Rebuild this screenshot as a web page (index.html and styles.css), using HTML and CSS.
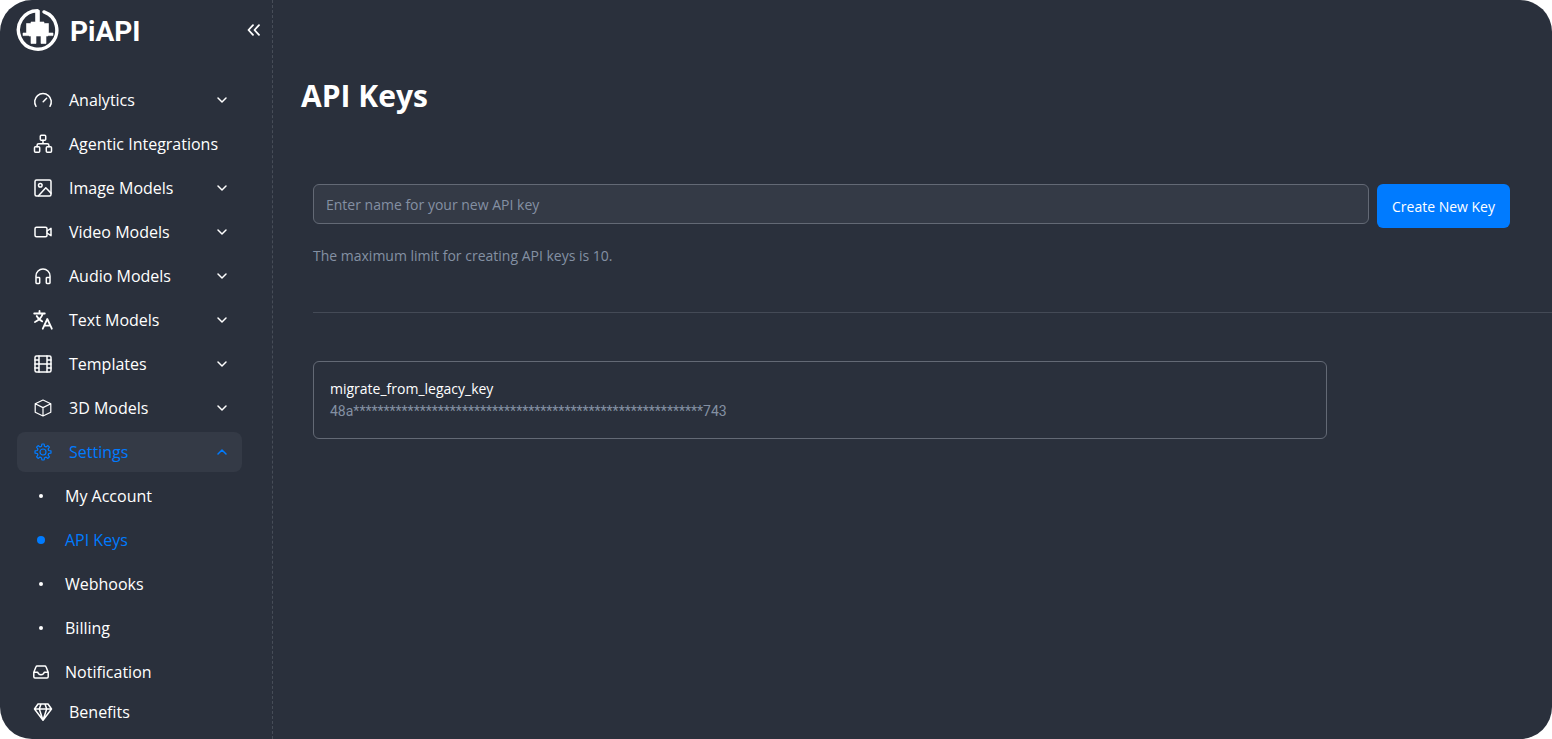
FILE: index.html
```html
<!DOCTYPE html>
<html lang="en">
<head>
<meta charset="utf-8">
<meta name="viewport" content="width=device-width, initial-scale=1">
<title>API Keys - PiAPI</title>
<link rel="stylesheet" href="styles.css">
</head>
<body>
<svg class="sprite" aria-hidden="true">
  <symbol id="down" viewBox="0 0 16 16"><path d="M4 6l4 4 4-4"/></symbol>
  <symbol id="up" viewBox="0 0 16 16"><path d="M4 10l4-4 4 4"/></symbol>
</svg>
<div class="app">
  <aside class="sidebar">
    <div class="brand">
      <a class="logo" href="#">
        <svg class="logo-mark" viewBox="0 0 44 44" aria-hidden="true">
          <path d="M21.500 2.800A19.200 19.200 0 1 0 28 3.900" fill="none" stroke="#fff" stroke-width="3.400" stroke-linecap="round"/>
          <path d="M19.500 2.500h4V14H28v1.500h4.500V25H37v2.600h-5V28h-2v7.500h-5V28h-5v7.500h-5V28h-2v-.4H7V25h3.500v-9.500H15V14h4.500z" fill="#fff" stroke="#fff" stroke-width=".6" stroke-linejoin="round"/>
        </svg>
        <span class="logo-text">PiAPI</span>
      </a>
      <button class="collapse" aria-label="Collapse sidebar">
        <svg class="ico bold" viewBox="0 0 16 16"><path d="M7 3.200L2.500 8 7 12.800M13 3.200L8.500 8l4.500 4.800"/></svg>
      </button>
    </div>
    <nav class="nav">
      <button class="item"><svg class="ico lg" viewBox="0 0 20 20"><path d="M3 16.300a8.300 8.300 0 1 1 14 0M10.200 11.800l3.400-3.500"/></svg><span class="label">Analytics</span><svg class="ico"><use href="#down"/></svg></button>
      <a class="item" href="#"><svg class="ico lg" viewBox="0 0 20 20"><rect x="7.300" y="1.200" width="5.400" height="5" rx="1"/><rect x="1.500" y="12.800" width="5.200" height="5.400" rx="1"/><rect x="13.300" y="12.800" width="5.200" height="5.400" rx="1"/><path d="M10 6.200v3.500M4.100 12.800v-1.500q0-1.600 1.600-1.600h8.600q1.600 0 1.600 1.600v1.500"/></svg><span class="label">Agentic Integrations</span></a>
      <button class="item"><svg class="ico lg" viewBox="0 0 20 20"><rect x="2" y="2" width="16" height="16" rx="1.500"/><circle cx="7.300" cy="7.300" r="1.800"/><path d="M5.500 17.800l7.300-8 5.200 5.300"/></svg><span class="label">Image Models</span><svg class="ico"><use href="#down"/></svg></button>
      <button class="item"><svg class="ico lg" viewBox="0 0 20 20"><rect x="2" y="5.300" width="12" height="9.400" rx="1.500"/><path d="M14 9l4-2.700v7.400L14 11"/></svg><span class="label">Video Models</span><svg class="ico"><use href="#down"/></svg></button>
      <button class="item"><svg class="ico lg" viewBox="0 0 20 20"><path d="M3 16.500V10a7 7 0 0 1 14 0v6.500M3 11.500h3q.7 0 .7.700v4.600q0 .7-.7.700H3.700q-.7 0-.7-.7zM17 11.500h-3q-.7 0-.7.700v4.600q0 .7.700.7h2.300q.7 0 .7-.7z"/></svg><span class="label">Audio Models</span><svg class="ico"><use href="#down"/></svg></button>
      <button class="item"><svg class="ico lg bold" viewBox="0 0 20 20"><path d="M1.200 3.500h10.600M6.500 1v2.500M9.800 3.500Q8.500 8.700 2 12M3.700 6q1.800 3.800 5.500 5.300M9.800 18.700L14.300 9l4.500 9.700M11.200 15.700h6.200"/></svg><span class="label">Text Models</span><svg class="ico"><use href="#down"/></svg></button>
      <button class="item"><svg class="ico lg" viewBox="0 0 20 20"><rect x="2" y="2" width="16" height="16" rx="1.500"/><path d="M6 2v16M14 2v16M6 10h8M2 6h4M2 10h4M2 14h4M14 6h4M14 10h4M14 14h4"/></svg><span class="label">Templates</span><svg class="ico"><use href="#down"/></svg></button>
      <button class="item"><svg class="ico lg thin" viewBox="0 0 20 20"><path d="M10 2l7.800 3.700v8.600L10 18l-7.800-3.700V5.700zM2.200 5.700L10 9.600l7.800-3.900M10 9.600V18"/></svg><span class="label">3D Models</span><svg class="ico"><use href="#down"/></svg></button>
      <button class="item open" aria-expanded="true"><svg class="ico lg thin" viewBox="0 0 20 20"><circle cx="10" cy="10" r="3"/><path d="M8.500 4.300L8.900 2h2.200l.4 2.300 1.500.600 1.900-1.300 1.500 1.500-1.300 1.900.6 1.500 2.300.4v2.200l-2.300.4-.6 1.500 1.300 1.900-1.500 1.500-1.900-1.300-1.500.600-.4 2.300H8.900l-.4-2.300-1.500-.6-1.900 1.300-1.500-1.500 1.300-1.900-.6-1.500L2 11.100V8.900l2.300-.4.6-1.500-1.300-1.900 1.500-1.500L7 4.900z"/></svg><span class="label">Settings</span><svg class="ico"><use href="#up"/></svg></button>
      <a class="item" href="#"><span class="dot"></span><span class="label">My Account</span></a>
      <a class="item current" href="#" aria-current="page"><span class="dot"></span><span class="label">API Keys</span></a>
      <a class="item" href="#"><span class="dot"></span><span class="label">Webhooks</span></a>
      <a class="item" href="#"><span class="dot"></span><span class="label">Billing</span></a>
      <a class="item flush" href="#"><svg class="ico" viewBox="0 0 16 16"><path d="M.8 8.200L3 2.800q.3-.8 1.100-.8h7.800q.8 0 1.100.8l2.200 5.400v4.600q0 1.200-1.200 1.200H2q-1.200 0-1.200-1.200zM.8 8.200h3.900q.5 2.500 3.300 2.500t3.300-2.500h3.900"/></svg><span class="label">Notification</span></a>
      <a class="item" href="#"><svg class="ico lg" viewBox="0 0 20 20"><path d="M5 2h10l3.500 5L10 18.300 1.500 7zM1.500 7h17M8 2L6.300 7 10 18.300 13.700 7 12 2"/></svg><span class="label">Benefits</span></a>
    </nav>
  </aside>
  <main class="main">
    <h1 class="title">API Keys</h1>
    <form class="create">
      <input class="field" type="text" aria-label="API key name" placeholder="Enter name for your new API key">
      <button class="primary" type="button">Create New Key</button>
    </form>
    <p class="hint">The maximum limit for creating API keys is 10.</p>
    <hr class="rule">
    <section class="card">
      <h2 class="key-name">migrate_from_legacy_key</h2>
      <p class="key-value">48a**********************************************************743</p>
    </section>
  </main>
</div>
</body>
</html>
```
FILE: styles.css
```css
* { box-sizing: border-box; }

body {
  margin: 0;
  background: #fff;
  color: #fff;
  font: 14px/24px "Open Sans", "Noto Sans", sans-serif;
}

.sprite { display: none; }

.app {
  display: flex;
  min-height: 100vh;
  background: #2a303c;
  border-radius: 32px;
  overflow: hidden;
}

.sidebar {
  flex: none;
  width: 273px;
  border-right: 1px dashed #474d58;
}

.brand {
  display: flex;
  align-items: center;
  justify-content: space-between;
  height: 60px;
  padding: 0 10px 0 16px;
}

.logo {
  display: flex;
  align-items: center;
  gap: 10px;
  color: #fff;
  text-decoration: none;
}

.logo-mark { width: 44px; height: 44px; }

.logo-text {
  padding-top: 4px;
  font: 700 28px/32px Roboto, sans-serif;
}

.collapse {
  display: flex;
  padding: 0;
  border: 0;
  background: none;
  color: #fff;
}

.ico {
  flex: none;
  width: 16px;
  height: 16px;
  fill: none;
  stroke: currentColor;
  stroke-width: 1.5;
  stroke-linecap: round;
  stroke-linejoin: round;
}

.lg { width: 20px; height: 20px; }

.thin { stroke-width: 1.2; }

.bold { stroke-width: 1.8; }

.nav {
  display: flex;
  flex-direction: column;
  gap: 4px;
  padding: 20px 30px 0 17px;
}

.item {
  display: flex;
  align-items: center;
  gap: 16px;
  height: 40px;
  padding: 0 12px 0 16px;
  border: 0;
  border-radius: 8px;
  background: none;
  color: #fff;
  font: 16px/24px "Open Sans", "Noto Sans", sans-serif;
  text-align: left;
  text-decoration: none;
  white-space: nowrap;
}

.label { flex: 1; }

.open { background: #343a46; }

.open, .current { color: #007bff; }

.flush { margin-bottom: -4px; }

.dot {
  display: flex;
  justify-content: center;
  width: 16px;
}

.dot::before {
  content: "";
  width: 4px;
  height: 4px;
  border-radius: 50%;
  background: currentColor;
}

.current .dot::before { width: 8px; height: 8px; }

.main {
  flex: 1;
  min-width: 0;
  padding: 76px 0 40px 40px;
}

.title {
  margin: 0 0 68px -12px;
  font-size: 30px;
  line-height: 40px;
  font-weight: 700;
}

.create {
  display: flex;
  align-items: flex-start;
  gap: 8px;
  margin-right: 42px;
}

.field {
  flex: 1;
  min-width: 0;
  height: 40px;
  padding: 0 12px;
  border: 1px solid #636975;
  border-radius: 6px;
  background: #343a46;
  color: #fff;
  font: inherit;
}

.field::placeholder { color: #8490a3; opacity: 1; }

.primary {
  height: 44px;
  padding: 2px 15px 0;
  border: 0;
  border-radius: 6px;
  background: #007bff;
  color: #fff;
  font: inherit;
}

.hint {
  margin: 16px 0 44px;
  color: #8490a3;
}

.rule {
  margin: 0 0 48px;
  border: 0;
  border-top: 1px solid #444a56;
}

.card {
  margin-right: 225px;
  padding: 16px;
  border: 1px solid #636975;
  border-radius: 6px;
  line-height: 22px;
}

.key-name {
  margin: 0;
  font-size: 14px;
  font-weight: 400;
}

.key-value {
  margin: 0;
  color: #8490a3;
  font-family: Roboto, sans-serif;
}
```
